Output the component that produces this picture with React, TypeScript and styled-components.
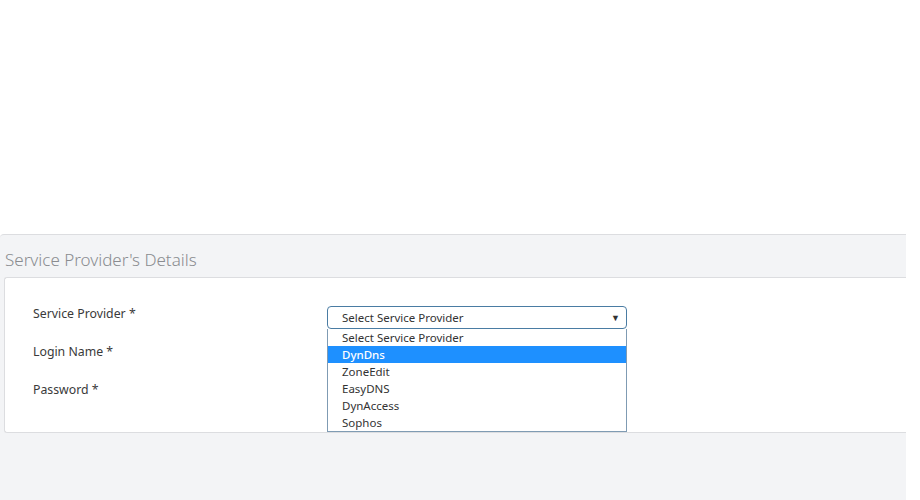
import React from "react";
import styled, { createGlobalStyle } from "styled-components";

const Global = createGlobalStyle`
  html, body { margin: 0; padding: 0; background: #ffffff; }
  body { font-family: "Noto Sans", "Open Sans", sans-serif; }
`;

const Page = styled.div`
  width: 906px;
  height: 500px;
  display: flex;
  flex-direction: column;
`;

const TopArea = styled.div`
  height: 234px;
  background: #ffffff;
  flex: none;
`;

const Section = styled.section`
  flex: 1;
  background: #f3f4f6;
  border-top: 1px solid #dcdde0;
  border-top-left-radius: 4px;
  padding: 14px 0 0 4px;
  display: flex;
  flex-direction: column;
`;

const Heading = styled.h2`
  margin: 0 0 6px 1px;
  font-family: "Noto Sans", sans-serif;
  font-weight: 300;
  font-size: 17px;
  line-height: 22px;
  color: #8a8c90;
`;

const Card = styled.div`
  background: #ffffff;
  border: 1px solid #dcdde0;
  border-right: none;
  border-radius: 3px 0 0 3px;
  height: 156px;
  box-sizing: border-box;
  padding: 26px 0 0 28px;
  display: grid;
  grid-template-columns: 294px 300px;
  grid-auto-rows: 38px;
  align-items: start;
`;

const Label = styled.div`
  font-family: "Noto Sans", sans-serif;
  font-size: 12.3px;
  line-height: 18px;
  padding-top: 1px;
  color: #3a3a3a;
`;

const SelectWrap = styled.div`
  position: relative;
  margin-top: 2px;
`;

const SelectBox = styled.div`
  height: 23px;
  box-sizing: border-box;
  border: 1px solid #4a7ca3;
  border-radius: 4px;
  display: flex;
  align-items: center;
  justify-content: space-between;
  padding: 0 6px 0 14px;
  font-family: "Noto Sans", sans-serif;
  font-size: 11.5px;
  color: #333;
  background: #fff;
`;

const Arrow = styled.span`
  font-size: 9px;
  color: #333;
  line-height: 1;
`;

const ListBox = styled.ul`
  position: absolute;
  left: 0;
  top: 23px;
  width: 300px;
  box-sizing: border-box;
  margin: 0;
  padding: 0;
  list-style: none;
  background: #fff;
  border: 1px solid #7f9bb3;
  border-top: none;
  z-index: 2;
`;

const Option = styled.li<{ $active?: boolean }>`
  height: 17px;
  line-height: 17px;
  padding-left: 14px;
  font-family: "Noto Sans", sans-serif;
  font-size: 11.5px;
  color: ${(p) => (p.$active ? "#ffffff" : "#333")};
  background: ${(p) => (p.$active ? "#1e90ff" : "transparent")};
  font-weight: ${(p) => (p.$active ? 500 : 400)};
`;

const options = ["Select Service Provider", "DynDns", "ZoneEdit", "EasyDNS", "DynAccess", "Sophos"];

export default function App() {
  return (
    <>
      <Global />
      <Page>
        <TopArea />
        <Section>
          <Heading>Service Provider's Details</Heading>
          <Card>
            <Label>Service Provider *</Label>
            <SelectWrap>
              <SelectBox>
                <span>Select Service Provider</span>
                <Arrow>▼</Arrow>
              </SelectBox>
              <ListBox>
                {options.map((o) => (
                  <Option key={o} $active={o === "DynDns"}>{o}</Option>
                ))}
              </ListBox>
            </SelectWrap>
            <Label>Login Name *</Label>
            <div />
            <Label>Password *</Label>
            <div />
          </Card>
        </Section>
      </Page>
    </>
  );
}
